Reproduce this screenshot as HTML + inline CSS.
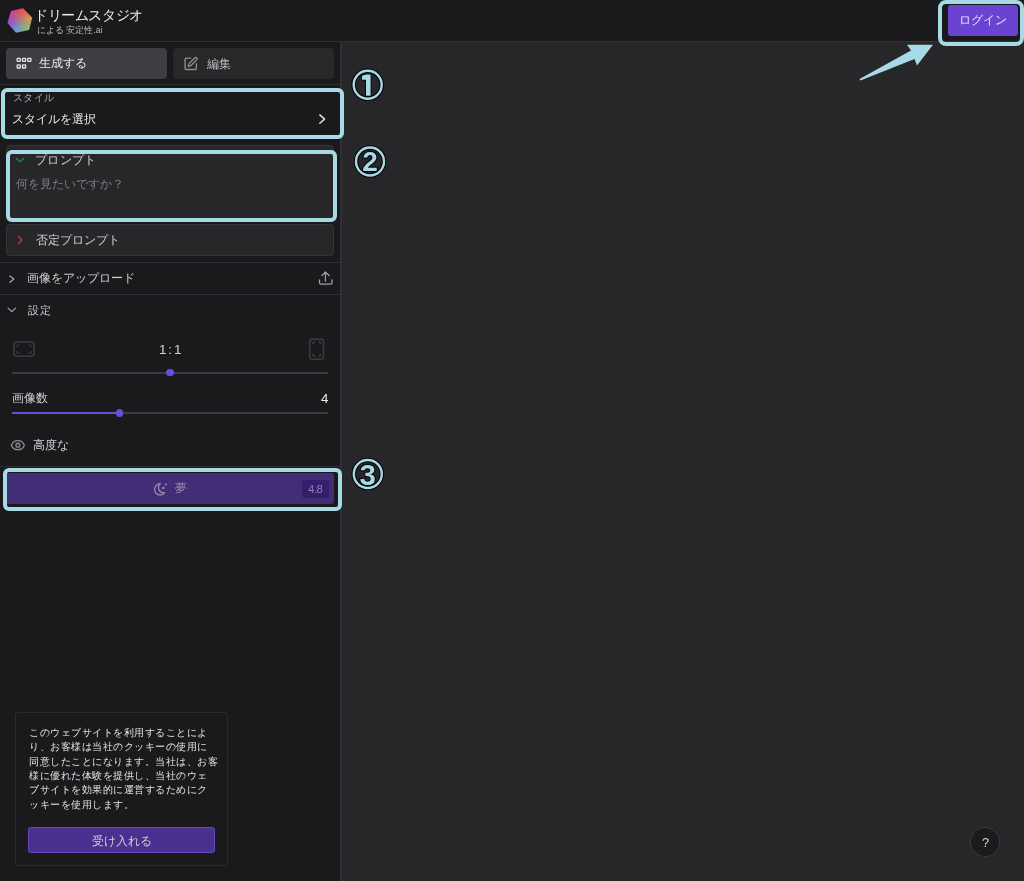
<!DOCTYPE html>
<html lang="ja">
<head>
<meta charset="utf-8">
<style>
*{box-sizing:border-box;margin:0;padding:0}
html,body{width:1024px;height:881px;overflow:hidden;background:#272729;font-family:"Liberation Sans",sans-serif;color:#e4e4e7}
.a{position:absolute}
.t{position:absolute;white-space:nowrap;line-height:1;will-change:transform}
svg.a{overflow:visible}
#hdr{left:0;top:0;width:1024px;height:42px;background:#1a1a1d;border-bottom:1px solid #323136}
#side{left:0;top:42px;width:342px;height:839px;background:#1a1a1d;border-right:2px solid #302f34}
.hl{position:absolute;border:4px solid #a7dae6;border-radius:6px}
.ic{fill:none;stroke-linecap:round;stroke-linejoin:round}
</style>
</head>
<body>
<div id="hdr" class="a"></div>
<div id="side" class="a"></div>

<!-- logo -->
<div class="a" style="left:0;top:0;width:40px;height:40px;clip-path:polygon(23.1px 8.2px,32.2px 17.8px,29.1px 30px,16px 32.7px,7.45px 23.1px,10.9px 11.1px);background:radial-gradient(circle at 19.8px 20.5px,rgba(165,125,135,0.9) 0px,rgba(165,125,135,0.35) 7px,rgba(165,125,135,0) 12px),conic-gradient(from 0deg at 19.8px 20.5px,#ef4f4a 15deg,#e39a52 78deg,#88c070 136deg,#5aa5d8 197deg,#8f4ae0 258deg,#d83a8a 317deg,#ef4f4a 375deg)"></div>
<div id="tx_title" class="t" style="left:34px;top:7.65px;font-size:14.01px;letter-spacing:-0.4px;color:#ececee">ドリームスタジオ</div>
<div id="tx_sub" class="t" style="left:36.5px;top:26px;font-size:8.63px;color:#b9b9bd">による 安定性.ai</div>

<!-- login -->
<div class="a" style="left:947.5px;top:5px;width:70.5px;height:30.8px;background:#6a44d0;border-radius:3px"></div>
<div id="tx_login" class="t" style="left:958.6px;top:14.75px;font-size:11.55px;color:#e9e3fb">ログイン</div>
<div class="hl" style="left:938.2px;top:-0.5px;width:86px;height:46px;border-width:4.4px;border-radius:8px"></div>

<!-- tabs -->
<div class="a" style="left:6px;top:48px;width:161px;height:30.6px;background:#3f3e44;border-radius:4px"></div>
<div class="a" style="left:173px;top:48px;width:161px;height:30.6px;background:#28282a;border-radius:4px"></div>
<div id="tx_gen" class="t" style="left:39px;top:57.48px;font-size:11.62px;color:#ececee">生成する</div>
<div id="tx_edit" class="t" style="left:206.5px;top:57.65px;font-size:11.98px;color:#bcbcc0">編集</div>
<div class="a" style="left:0;top:84.2px;width:340px;height:1.3px;background:#2e2d31"></div>

<!-- style -->
<div id="tx_sty" class="t" style="left:13px;top:93.35px;font-size:10.42px;letter-spacing:0.33px;color:#a9a9ae">スタイル</div>
<div id="tx_stysel" class="t" style="left:12px;top:113px;font-size:11.63px;color:#ececee">スタイルを選択</div>

<!-- prompt -->
<div class="a" style="left:6px;top:145px;width:328px;height:77px;background:#272729;border:1px solid #343337;border-radius:4px"></div>
<div id="tx_prm" class="t" style="left:35px;top:155.15px;font-size:11.96px;letter-spacing:0.25px;color:#cfcfd3">プロンプト</div>
<div id="tx_ph" class="t" style="left:16px;top:178.25px;font-size:11.64px;color:#7d7d83">何を見たいですか？</div>

<!-- negative -->
<div class="a" style="left:6px;top:224px;width:328px;height:32px;background:#272729;border:1px solid #343337;border-radius:4px"></div>
<div id="tx_neg" class="t" style="left:36px;top:234.95px;font-size:11.81px;color:#cfcfd3">否定プロンプト</div>

<!-- upload -->
<div class="a" style="left:0;top:262px;width:340px;height:1px;background:#2e2d31"></div>
<div id="tx_up" class="t" style="left:27px;top:272.2px;font-size:11.62px;color:#cfcfd3">画像をアップロード</div>
<div class="a" style="left:0;top:294px;width:340px;height:1px;background:#2e2d31"></div>

<!-- settings -->
<div id="tx_set" class="t" style="left:28px;top:305.15px;font-size:11.37px;letter-spacing:1.1px;color:#cfcfd3">設定</div>
<div id="tx_ratio" class="t" style="left:158.7px;top:342.8px;font-size:13.3px;letter-spacing:-0.9px;color:#d4d4d8">1 : 1</div>
<div class="a" style="left:12px;top:372px;width:316px;height:1.5px;background:#3c3b40"></div>
<div class="a" style="left:166.3px;top:368.9px;width:7.5px;height:7.5px;border-radius:50%;background:#6d4be0"></div>
<div id="tx_cnt" class="t" style="left:12px;top:393.15px;font-size:11.59px;color:#cfcfd3">画像数</div>
<div id="tx_4" class="t" style="left:321px;top:392.3px;font-size:13.3px;color:#ececee">4</div>
<div class="a" style="left:12px;top:412px;width:316px;height:1.5px;background:#3c3b40"></div>
<div class="a" style="left:12px;top:412px;width:107px;height:1.5px;background:#6d4be0"></div>
<div class="a" style="left:115.5px;top:409.3px;width:7.5px;height:7.5px;border-radius:50%;background:#6d4be0"></div>
<div id="tx_adv" class="t" style="left:33px;top:438.6px;font-size:11.79px;color:#cfcfd3">高度な</div>

<!-- dream -->
<div class="a" style="left:0;top:466.2px;width:340px;height:1.2px;background:#2e2d31"></div>
<div class="a" style="left:6px;top:473px;width:328px;height:31px;background:#432d77;border-radius:3px"></div>
<div id="tx_dream" class="t" style="left:175.2px;top:482.3px;font-size:11.6px;color:#968fae">夢</div>
<div class="a" style="left:302px;top:480px;width:26.5px;height:18px;background:#341f6e;border-radius:3px"></div>
<div id="tx_48" class="t" style="left:308.3px;top:484.1px;font-size:11.3px;letter-spacing:-0.4px;color:#8a82a8">4.8</div>

<!-- cookie -->
<div class="a" style="left:15px;top:712px;width:213px;height:153.5px;background:#1a1a1d;border:1px solid #2b2b2e;border-radius:3px"></div>
<div id="tx_ck" class="a" style="will-change:transform;left:29px;top:726px;font-size:10.4px;letter-spacing:0.52px;line-height:14.35px;color:#e4e4e7;white-space:nowrap">このウェブサイトを利用することによ<br>り、お客様は当社のクッキーの使用に<br>同意したことになります。当社は、お客<br>様に優れた体験を提供し、当社のウェ<br>ブサイトを効果的に運営するためにク<br>ッキーを使用します。</div>
<div class="a" style="left:28px;top:826.8px;width:187.3px;height:26.4px;background:#4a3190;border:1px solid #6548c0;border-radius:3px"></div>
<div id="tx_acc" class="t" style="left:91.7px;top:835.75px;font-size:11.88px;color:#cfcfd3">受け入れる</div>

<!-- help -->
<div class="a" style="left:970.3px;top:827.2px;width:29.8px;height:30px;border-radius:50%;background:#1b1b1e;border:1.2px solid #3a393e"></div>
<div id="tx_q" class="t" style="left:981.6px;top:835.85px;font-size:13px;color:#cfcfd3">?</div>

<!-- ICONS -->
<svg class="a" style="left:0;top:0" width="1024" height="881">
<!-- grid icon -->
<g fill="none" stroke="#e4e4e7" stroke-width="1.35">
<rect x="17.2" y="58.3" width="3.1" height="3.1" rx="0.6"/>
<rect x="22.5" y="58.3" width="3.1" height="3.1" rx="0.6"/>
<rect x="27.8" y="58.3" width="3.1" height="3.1" rx="0.6"/>
<rect x="17.2" y="64.9" width="3.1" height="3.1" rx="0.6"/>
<rect x="22.5" y="64.9" width="3.1" height="3.1" rx="0.6"/>
</g>
<!-- edit icon -->
<g transform="translate(183.2,56.3) scale(0.63)" class="ic" stroke="#8f8f95" stroke-width="2.1">
<path d="M12 3H5a2 2 0 0 0-2 2v14a2 2 0 0 0 2 2h14a2 2 0 0 0 2-2v-7"/>
<path d="M18.375 2.625a1 1 0 0 1 3 3l-9.013 9.014a2 2 0 0 1-.853.505l-2.873.84a.5.5 0 0 1-.62-.62l.84-2.873a2 2 0 0 1 .506-.852z"/>
</g>
<!-- style chevron -->
<polyline class="ic" points="319.8,114.9 324.6,119.1 319.8,123.3" stroke="#e4e4e7" stroke-width="1.4"/>
<!-- green chevron -->
<polyline class="ic" points="16.4,158.4 19.95,161.8 23.5,158.4" stroke="#2c7f48" stroke-width="1.4"/>
<!-- red chevron -->
<polyline class="ic" points="18.5,236.4 21.9,239.9 18.5,243.5" stroke="#b3393b" stroke-width="1.4"/>
<!-- upload chevron -->
<polyline class="ic" points="9.9,275.9 13.8,279.1 9.9,282.3" stroke="#a1a1a8" stroke-width="1.3"/>
<!-- upload icon -->
<g class="ic" stroke="#a1a1a8" stroke-width="1.3">
<path d="M325.4,272.2 V281"/>
<path d="M321.8,275.6 L325.4,272.2 L329.2,275.6"/>
<path d="M319.5,279.8 V282.6 a1.6,1.6 0 0 0 1.6,1.6 H330.4 a1.6,1.6 0 0 0 1.6,-1.6 V279.8"/>
</g>
<!-- settings chevron -->
<polyline class="ic" points="8.1,308.1 11.8,311.6 15.5,308.1" stroke="#a1a1a8" stroke-width="1.3"/>
<!-- landscape icon -->
<g class="ic" stroke="#3b3a3f" stroke-width="1.6">
<rect x="14" y="342" width="20" height="14.2" rx="2.6"/>
<path d="M16.8,346.3 L18.4,345" /><path d="M29.6,345 L31.2,346.3"/>
<path d="M16.8,352 L18.4,353.3"/><path d="M29.6,353.3 L31.2,352"/>
</g>
<!-- portrait icon -->
<g class="ic" stroke="#3b3a3f" stroke-width="1.6">
<rect x="309.7" y="339.1" width="13.8" height="20.1" rx="2.4"/>
<path d="M312.6,343.3 L314.2,341.9"/><path d="M319.3,341.9 L320.9,343.3"/>
<path d="M312.6,354.7 L314.2,356.1"/><path d="M319.3,356.1 L320.9,354.7"/>
</g>
<!-- eye icon -->
<g transform="translate(10.2,437.5) scale(0.64)" class="ic" stroke="#8e8e94" stroke-width="2.1">
<path d="M2.062 12.348a1 1 0 0 1 0-.696 10.75 10.75 0 0 1 19.876 0 1 1 0 0 1 0 .696 10.75 10.75 0 0 1-19.876 0"/>
<circle cx="12" cy="12" r="3"/>
</g>
<!-- moon icon -->
<path class="ic" d="M160.3,483.7 A5.65,5.65 0 1 0 164.7,492.7 A5.2,5.2 0 0 1 160.3,483.7 Z" stroke="#968fae" stroke-width="1.25"/>
<circle cx="165.8" cy="484.5" r="1.05" fill="#968fae"/>
<circle cx="163.2" cy="488" r="1.2" fill="#968fae"/>

<!-- arrow -->
<polygon points="859.5,79 911,50.5 907,44.8 933,44.8 917,65.5 914.5,59 860.5,80.5" fill="#a7dae6"/>

<!-- circled numbers -->
<g font-family="Liberation Sans, sans-serif" font-weight="bold" text-anchor="middle">
<circle cx="367.7" cy="84.7" r="14" fill="none" stroke="#000" stroke-width="4.5" opacity="0.9"/>
<circle cx="367.7" cy="84.7" r="14" fill="none" stroke="#a7dae6" stroke-width="2.4"/>
<path d="M362,75.8 L366.2,74.5 L370.6,74.5 L370.6,95.8 L366,95.8 L366,79.7 L362,79.7 Z" fill="#a7dae6" stroke="#000" stroke-width="1.6" paint-order="stroke" stroke-linejoin="round"/>
<circle cx="370" cy="161.5" r="14" fill="none" stroke="#000" stroke-width="4.5" opacity="0.9"/>
<circle cx="370" cy="161.5" r="14" fill="none" stroke="#a7dae6" stroke-width="2.4"/>
<text x="370" y="170.9" font-size="28" fill="#a7dae6" stroke="#000" stroke-width="2" paint-order="stroke">2</text>
<circle cx="367.8" cy="474" r="14" fill="none" stroke="#000" stroke-width="4.5" opacity="0.9"/>
<circle cx="367.8" cy="474" r="14" fill="none" stroke="#a7dae6" stroke-width="2.4"/>
<text x="367.7" y="484.8" font-size="29.5" fill="#a7dae6" stroke="#000" stroke-width="2" paint-order="stroke">3</text>
</g>
</svg>

<!-- highlight boxes on top -->
<div class="hl" style="left:0.5px;top:88px;width:343.6px;height:51px;border-width:4.3px"></div>
<div class="hl" style="left:6px;top:149.5px;width:331px;height:72px"></div>
<div class="hl" style="left:3px;top:468px;width:339px;height:43px;border-width:4.1px"></div>

</body>
</html>
